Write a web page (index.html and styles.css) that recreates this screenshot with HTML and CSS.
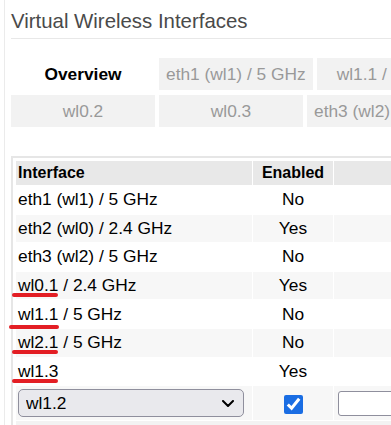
FILE: index.html
```html
<!DOCTYPE html>
<html lang="en">
<head>
  <meta charset="UTF-8" />
  <meta name="viewport" content="width=device-width, initial-scale=1.0" />
  <title>Virtual Wireless Interfaces</title>
  <link rel="stylesheet" href="styles.css">
</head>
<body>
  <div class="page">
    <h1 class="title">Virtual Wireless Interfaces</h1>

    <!-- Tabs -->
    <div class="tabs">
      <div class="tab-row">
        <span class="tab active">Overview</span>
        <span class="tab">eth1 (wl1) / 5 GHz</span>
        <span class="tab">wl1.1 / 5 GHz</span>
        <span class="tab">wl1.3 / 5 GHz</span>
        <span class="tab">eth2 (wl0) / 2.4 GHz</span>
      </div>
      <div class="tab-row">
        <span class="tab">wl0.2</span>
        <span class="tab">wl0.3</span>
        <span class="tab">eth3 (wl2) / 5 GHz</span>
        <span class="tab">wl2.1 / 5 GHz</span>
      </div>
    </div>

    <table class="iface-table">
      <thead>
        <tr>
          <th class="col-name">Interface</th>
          <th class="col-enabled center">Enabled</th>
          <th class="col-ssid center">SSID</th>
        </tr>
      </thead>
      <tbody>
        <tr><td>eth1 (wl1) / 5 GHz</td><td class="center">No</td><td class="center"></td></tr>
        <tr><td>eth2 (wl0) / 2.4 GHz</td><td class="center">Yes</td><td class="center"></td></tr>
        <tr><td>eth3 (wl2) / 5 GHz</td><td class="center">No</td><td class="center"></td></tr>
        <tr><td><span class="mark">wl0.1</span> / 2.4 GHz</td><td class="center">Yes</td><td class="center"></td></tr>
        <tr><td><span class="mark mark-low">wl1.1</span> / 5 GHz</td><td class="center">No</td><td class="center"></td></tr>
        <tr><td><span class="mark">wl2.1</span> / 5 GHz</td><td class="center">No</td><td class="center"></td></tr>
        <tr><td><span class="mark">wl1.3</span></td><td class="center">Yes</td><td class="center"></td></tr>
        <tr class="edit-row">
          <td>
            <div class="select-wrap">
              <select class="iface-select">
                <option>wl1.2</option>
                <option>wl0.2</option>
                <option>wl0.3</option>
              </select>
              <svg class="chevron" viewBox="0 0 12 7" width="12" height="7">
                <path d="M1 1l5 5 5-5" fill="none" stroke="#000" stroke-width="2" stroke-linecap="round" stroke-linejoin="round"/>
              </svg>
            </div>
          </td>
          <td class="center"><input type="checkbox" class="check" checked /></td>
          <td><input type="text" class="ssid-input" /></td>
        </tr>
        <tr class="foot-row"><td colspan="3"></td></tr>
      </tbody>
    </table>
  </div>
</body>
</html>
```

FILE: styles.css
```css
body {
  margin: 0;
  font-family: "Liberation Sans", Arial, sans-serif;
  background: #fff;
  overflow: hidden;
}

.page {
  margin-left: 4px;
  border-left: 1px solid #ebebeb;
  padding-left: 6px;
  width: 900px;
  min-height: 425px;
}

.title {
  margin: 0;
  padding: 9px 0 5px;
  font-size: 20.4px;
  line-height: 24px;
  font-weight: normal;
  color: #4a4a4a;
  border-bottom: 1px solid #e8e8e8;
}

.tabs {
  margin-top: 19px;
  display: flex;
  flex-direction: column;
  gap: 5px;
}

.tab-row {
  display: flex;
  gap: 4px;
}

.tab {
  min-width: 144px;
  height: 32px;
  padding: 0 7px;
  box-sizing: border-box;
  line-height: 32px;
  text-align: center;
  font-size: 17.33px;
  color: #999;
  background: #f2f2f2;
  white-space: nowrap;
}

.tab.active {
  background: none;
  color: #000;
  font-weight: bold;
}

.iface-table {
  margin-top: 29px;
  border: 2px solid #e6e6e6;
  padding: 2px;
  border-spacing: 1px;
  font-size: 17.33px;
  color: #000;
}

.iface-table th,
.iface-table td {
  box-sizing: border-box;
  padding: 0 2px;
  text-align: left;
  white-space: nowrap;
}

.iface-table th {
  height: 24px;
  background: #e8e8e8;
  font-size: 16px;
}

.iface-table td {
  height: 27.6px;
}

.iface-table .center {
  text-align: center;
}

.col-name {
  width: 236px;
}

.col-enabled {
  width: 80px;
}

.col-ssid {
  width: 320px;
}

.iface-table tbody tr:nth-child(even) td {
  background: #f7f7f7;
}

.iface-table tbody .edit-row td {
  height: 34px;
  background: #efefef;
}

.iface-table tbody .foot-row td {
  height: 30px;
  background: #f3f3f3;
}

/* red hand marks */
.mark {
  position: relative;
  display: inline-block;
}

.mark::after {
  content: "";
  position: absolute;
  left: -6px;
  right: 0;
  bottom: -1px;
  height: 4px;
  border-radius: 2px;
  background: #e31e24;
}

.mark-low::after {
  left: -9px;
  right: -1px;
  bottom: -4px;
}

.select-wrap {
  position: relative;
  width: 226px;
}

.iface-select {
  display: block;
  appearance: none;
  width: 226px;
  height: 28px;
  padding: 0 0 0 7px;
  border: 1px solid #8f8f9d;
  border-radius: 5px;
  background: #e9e9ed;
  font-family: inherit;
  font-size: 17.33px;
  color: #000;
}

.chevron {
  position: absolute;
  right: 10px;
  top: 11px;
}

.check {
  width: 19px;
  height: 19px;
  margin: 0;
  vertical-align: middle;
  accent-color: #1a6de3;
}

.ssid-input {
  width: 220px;
  height: 25px;
  margin-left: 2px;
  box-sizing: border-box;
  border: 1px solid #8f8f9d;
  border-radius: 3px;
  background: #fff;
  vertical-align: middle;
}
```
